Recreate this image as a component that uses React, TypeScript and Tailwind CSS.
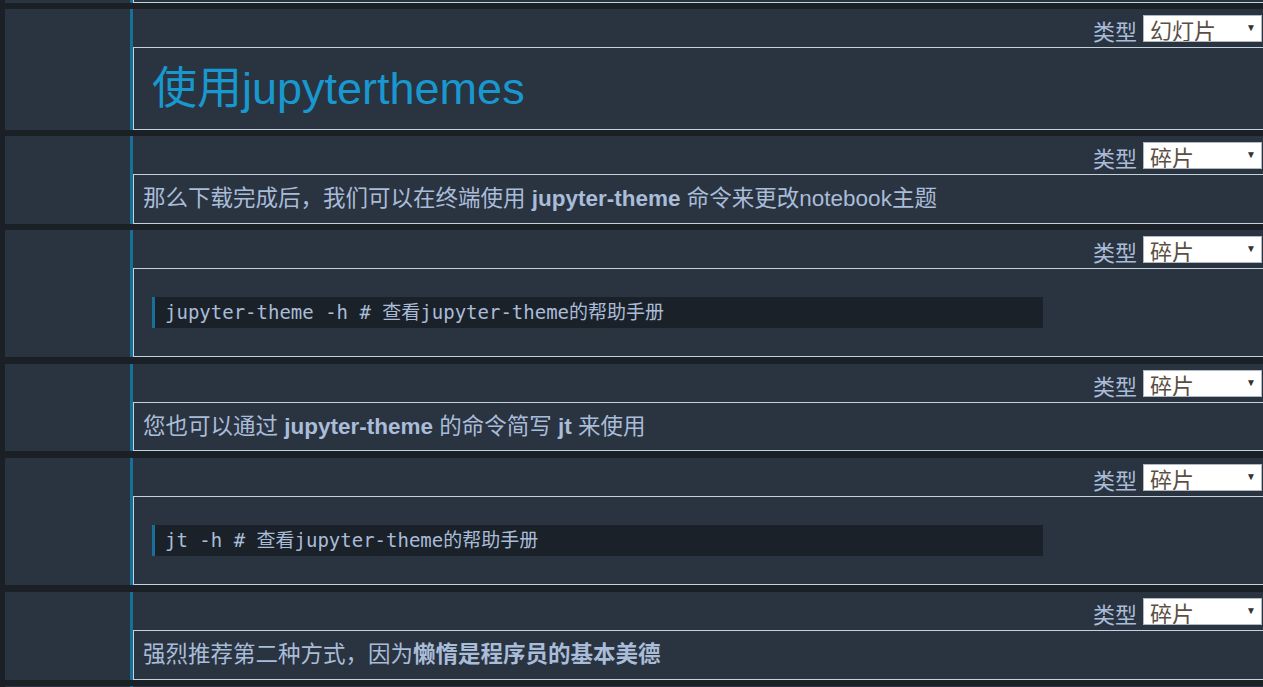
import React from "react";

const SANS = '"Liberation Sans","Noto Sans CJK SC",sans-serif';
const MONO = '"DejaVu Sans Mono","Noto Sans CJK SC",monospace';

function Toolbar({ value }: { value: string }) {
  return (
    <div className="h-[38px] flex justify-end items-start pt-[6px] pr-[13px]">
      <span className="text-[22px] leading-[25px] text-[#a9bcd8] mr-[6px] mt-[5px]">类型</span>
      <div className="relative w-[119px] h-[27px] bg-white border border-[#b0b8c0] overflow-hidden">
        <span className="absolute left-[6px] top-[1px] text-[22px] leading-[30px] text-[#5b4f45]">{value}</span>
        <span className="absolute right-[5px] top-[5px] text-[10px] leading-[14px] text-[#333]">▼</span>
      </div>
    </div>
  );
}

function Cell({
  mt,
  boxH,
  value,
  children,
}: {
  mt: string;
  boxH: string;
  value: string;
  children: React.ReactNode;
}) {
  return (
    <div className={`flex bg-[#2a3340] ${mt}`}>
      <div className="w-[125px] shrink-0" />
      <div className="w-[3px] shrink-0 bg-[#15709a]" />
      <div className="flex-1 flex flex-col">
        <Toolbar value={value} />
        <div className={`${boxH} border border-[#c3d2dd] flex items-center`}>{children}</div>
      </div>
    </div>
  );
}

function Code({ children }: { children: React.ReactNode }) {
  return (
    <div
      className="ml-[18px] w-[891px] h-[31px] bg-[#1b2129] border-l-[3px] border-[#15709a] pl-[10px] flex items-center text-[19px] text-[#a9bcd8] whitespace-pre"
      style={{ fontFamily: MONO }}
    >
      {children}
    </div>
  );
}

function P({ children }: { children: React.ReactNode }) {
  return <div className="pl-[9px] text-[22.5px] text-[#a9bcd8] leading-[30px] whitespace-nowrap">{children}</div>;
}

export default function App() {
  return (
    <div className="w-[1263px] h-[687px] overflow-hidden bg-[#1b2027]" style={{ fontFamily: SANS }}>
      <div className="w-[1275px] pl-[5px]">
        <div className="flex bg-[#2a3340] h-[3px]">
          <div className="w-[125px] shrink-0" />
          <div className="w-[3px] shrink-0 bg-[#15709a]" />
          <div className="flex-1 border-b border-x border-[#c3d2dd]" />
        </div>

        <Cell mt="mt-[6px]" boxH="h-[83px]" value="幻灯片">
          <h1 className="pl-[18px] text-[45px] leading-[56px] text-[#1898cf] font-normal whitespace-nowrap">使用jupyterthemes</h1>
        </Cell>

        <Cell mt="mt-[6px]" boxH="h-[50px]" value="碎片">
          <P>
            那么下载完成后，我们可以在终端使用 <b className="font-bold">jupyter-theme</b> 命令来更改notebook主题
          </P>
        </Cell>

        <Cell mt="mt-[6px]" boxH="h-[89px]" value="碎片">
          <Code>jupyter-theme -h # 查看jupyter-theme的帮助手册</Code>
        </Cell>

        <Cell mt="mt-[7px]" boxH="h-[49px]" value="碎片">
          <P>
            您也可以通过 <b className="font-bold">jupyter-theme</b> 的命令简写 <b className="font-bold">jt</b> 来使用
          </P>
        </Cell>

        <Cell mt="mt-[7px]" boxH="h-[89px]" value="碎片">
          <Code>jt -h # 查看jupyter-theme的帮助手册</Code>
        </Cell>

        <Cell mt="mt-[7px]" boxH="h-[50px]" value="碎片">
          <P>
            强烈推荐第二种方式，因为<b className="font-bold">懒惰是程序员的基本美德</b>
          </P>
        </Cell>

        <div className="flex bg-[#2a3340] h-[20px] mt-[6px]">
          <div className="w-[125px] shrink-0" />
          <div className="w-[3px] shrink-0 bg-[#15709a]" />
          <div className="flex-1" />
        </div>
      </div>
    </div>
  );
}
